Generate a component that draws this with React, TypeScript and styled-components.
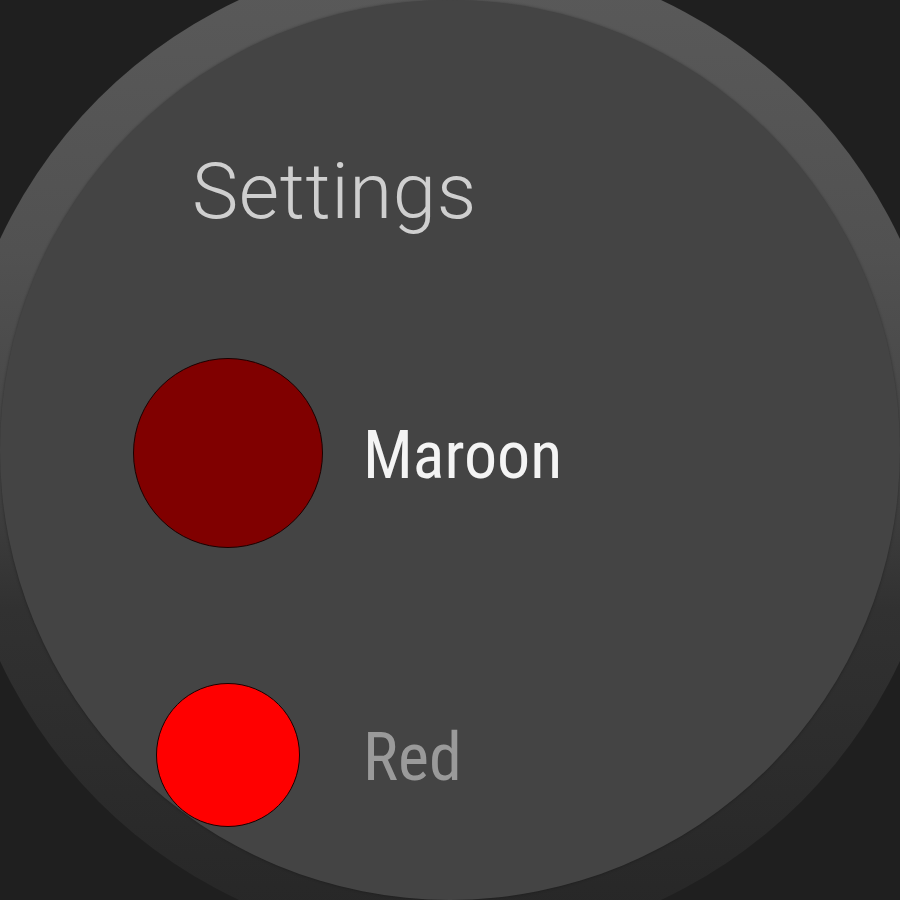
import styled, { createGlobalStyle } from "styled-components";

const GlobalStyle = createGlobalStyle`
  html, body {
    margin: 0;
    padding: 0;
    background: #1f1f1f;
  }
  body {
    font-family: Roboto, "Liberation Sans", sans-serif;
  }
`;

const Screen = styled.div`
  width: 900px;
  height: 900px;
  overflow: hidden;
  display: flex;
  align-items: center;
  justify-content: center;
  background: #1f1f1f;
`;

const Bezel = styled.div`
  flex: none;
  width: 994px;
  height: 994px;
  border-radius: 50%;
  box-sizing: border-box;
  padding: 47px;
  background: linear-gradient(
    to bottom,
    #5a5a5a 0%,
    #515151 30%,
    #464646 50%,
    #313131 66%,
    #262626 100%
  );
`;

const Face = styled.div`
  width: 900px;
  height: 900px;
  border-radius: 50%;
  overflow: hidden;
  background: #444444;
  box-shadow: 0 0 3px rgba(0, 0, 0, 0.35);
  box-sizing: border-box;
  padding: 153px 0 0 133px;
  display: flex;
  flex-direction: column;
`;

const Title = styled.h1`
  margin: 0 0 71px 59px;
  font-family: Roboto, "Liberation Sans", sans-serif;
  font-weight: 300;
  font-size: 78px;
  letter-spacing: 0.6px;
  line-height: 1;
  color: #cfcfcf;
`;

const Row = styled.div`
  height: 302px;
  display: flex;
  align-items: center;
  flex: none;
`;

const SwatchSlot = styled.div`
  width: 190px;
  display: flex;
  justify-content: center;
`;

const Swatch = styled.div<{ $color: string; $size: number }>`
  width: ${(p) => p.$size}px;
  height: ${(p) => p.$size}px;
  border-radius: 50%;
  box-sizing: border-box;
  border: 1.5px solid #1a0000;
  background: ${(p) => p.$color};
`;

const Label = styled.span<{ $active: boolean }>`
  margin-left: 40px;
  font-family: "Roboto Condensed", Roboto, "Liberation Sans", sans-serif;
  font-stretch: condensed;
  font-weight: 400;
  font-size: 66px;
  line-height: 1;
  color: ${(p) => (p.$active ? "#f4f4f4" : "#9a9a9a")};
  padding-top: 6px;
`;

const colors = [
  { name: "Maroon", value: "#800000", size: 190, active: true },
  { name: "Red", value: "#ff0000", size: 144, active: false },
];

export default function App() {
  return (
    <>
      <GlobalStyle />
      <Screen>
        <Bezel>
          <Face>
            <Title>Settings</Title>
            {colors.map((c) => (
              <Row key={c.name}>
                <SwatchSlot>
                  <Swatch $color={c.value} $size={c.size} />
                </SwatchSlot>
                <Label $active={c.active}>{c.name}</Label>
              </Row>
            ))}
          </Face>
        </Bezel>
      </Screen>
    </>
  );
}
